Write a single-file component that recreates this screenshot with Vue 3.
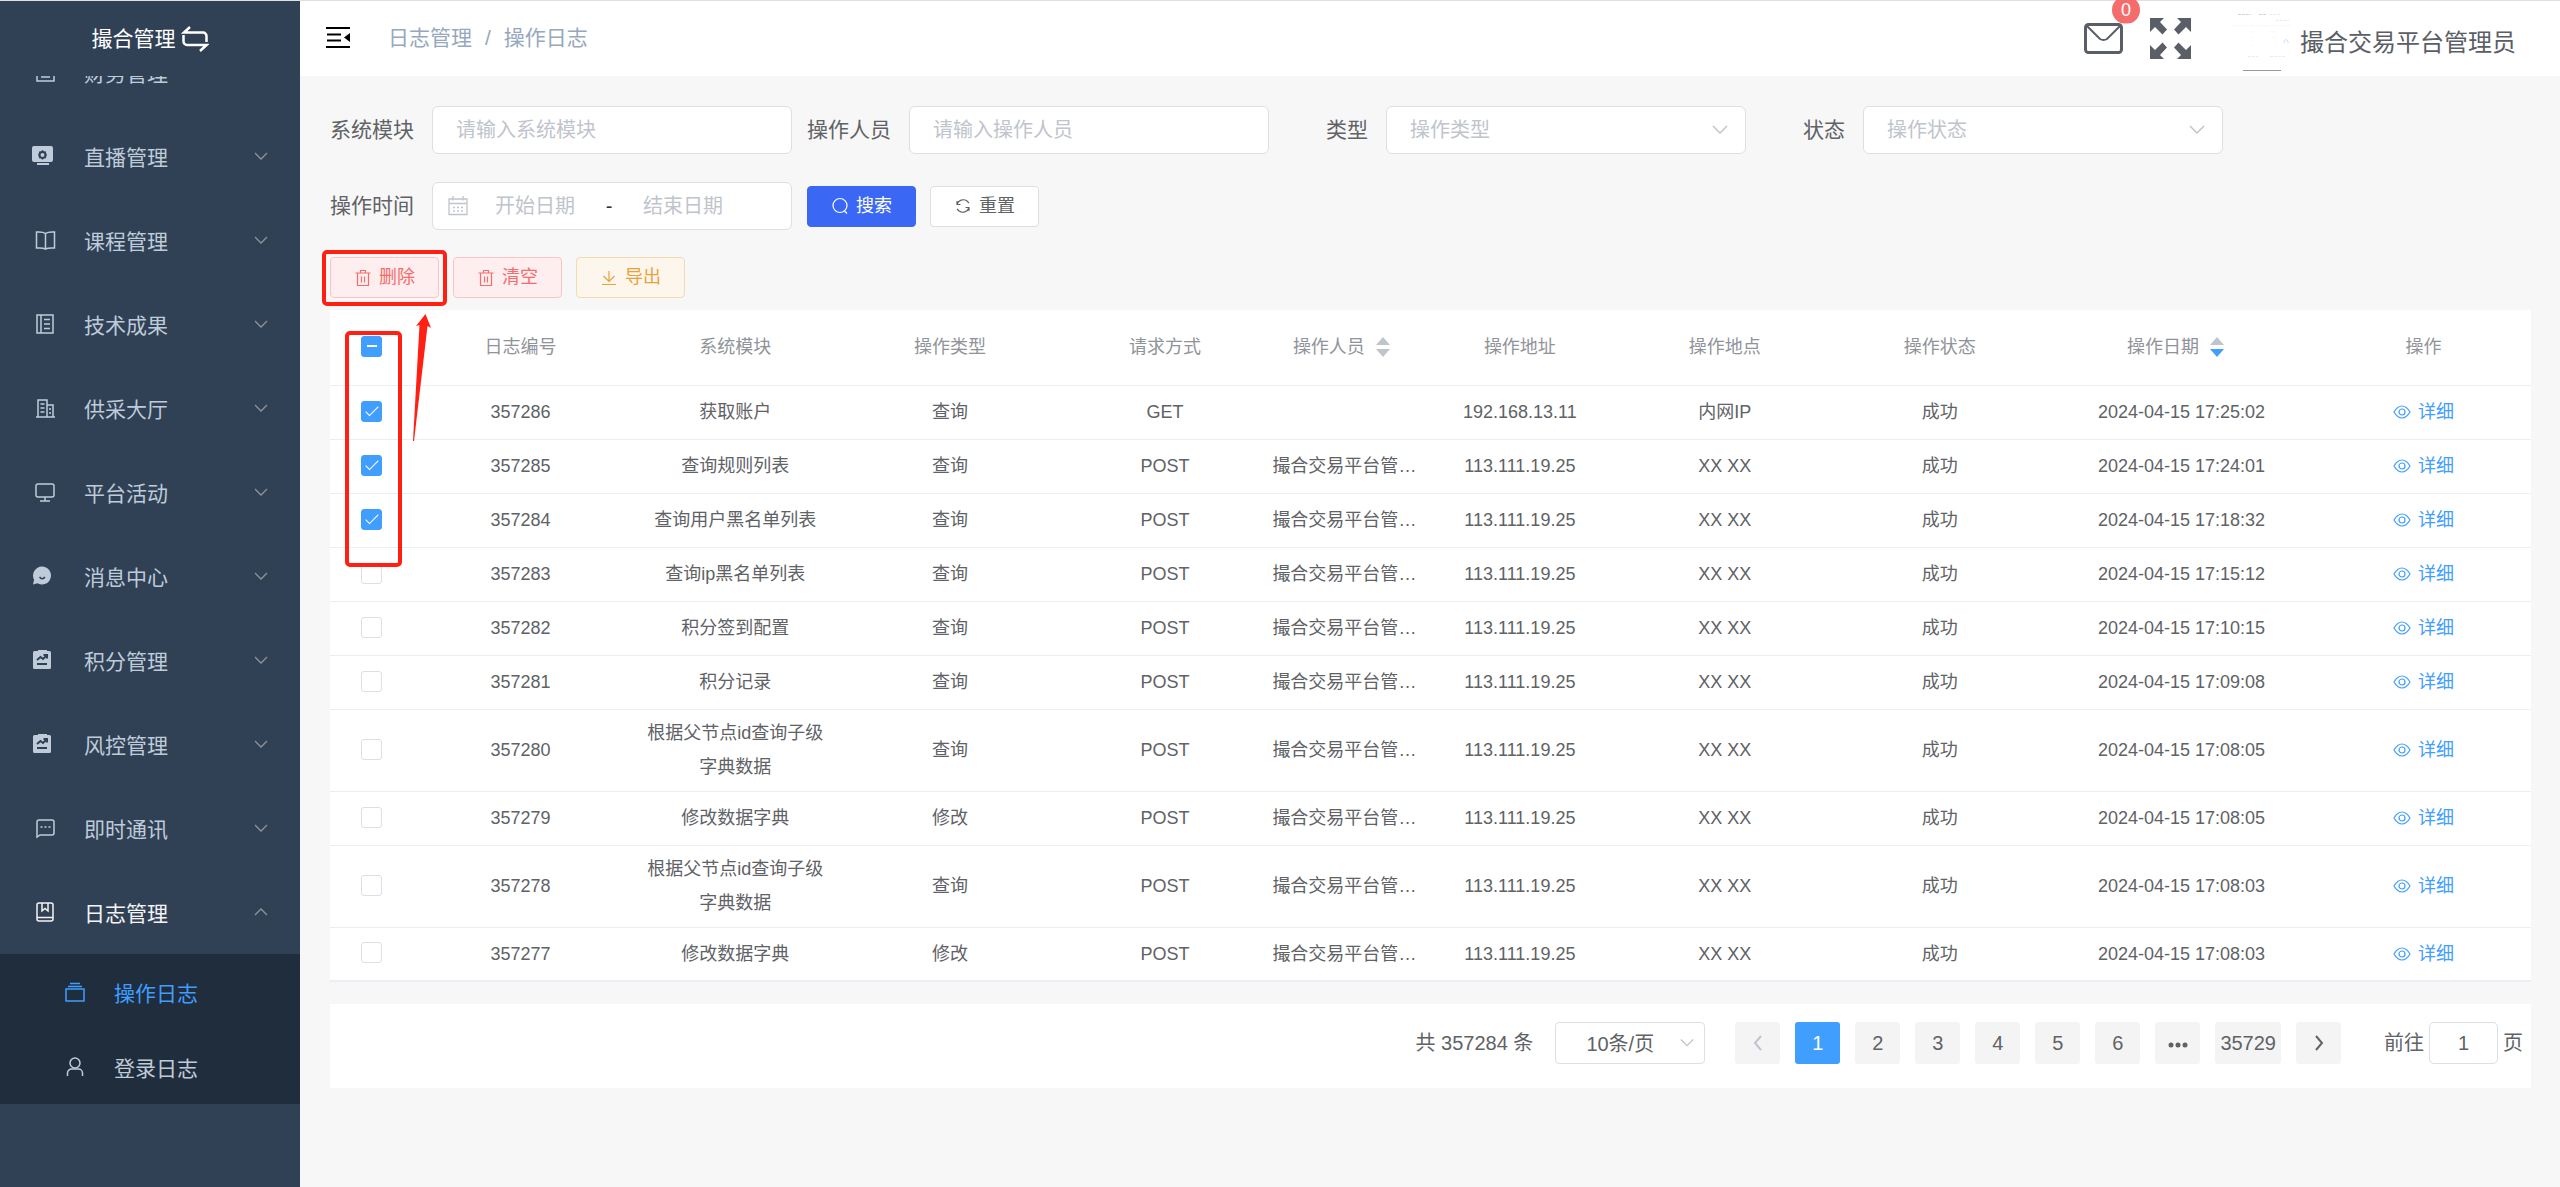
<script setup>
import { ref } from 'vue'

const icons = {
  wallet: '<path d="M4 8h17v13H4zM8 8V4h9v4M8 17h9M8 13h9"/>',
  live: '<g fill="currentColor" stroke="none"><path fill-rule="evenodd" d="M4 2h17a2 2 0 0 1 2 2v12a2 2 0 0 1-2 2H4a2 2 0 0 1-2-2V4a2 2 0 0 1 2-2zM12.500 6l1.500 1.200 1.900.3.300 1.900L17 11l-.8 1.500-.3 1.800-1.900.2-1.500 1.200-1.500-1.200-1.900-.2-.3-1.800L8 11l.8-1.600.3-1.900 1.900-.3zM12.500 9a2 2 0 1 0 0 4 2 2 0 0 0 0-4z"/><path d="M7 19h12v2H7z"/></g>',
  book: '<path d="M12.500 5.500C10 3.500 6.500 4 3.500 4v16c3 0 6-.5 9 1 3-1.500 6-1 9-1V4c-3 0-6.500-.5-9 1.500V21"/>',
  notebook: '<path d="M4 3h16v18H4zM8 3v18M11 7.500h6M11 12h6M11 16.500h6"/>',
  office: '<path d="M3 21h19M5 21V4h9v17M14 9h6v12M7.500 8h4M7.500 12h4M7.500 16h4M16 13h2M16 17h2"/>',
  monitor: '<rect x="3" y="4" width="18" height="13" rx="2"/><path d="M12 17v4M7 21h10"/>',
  chat: '<path fill="currentColor" stroke="none" fill-rule="evenodd" d="M12 2.500a9 9 0 1 1-4.500 16.800L3 20.500l1.100-4.700A9 9 0 0 1 12 2.500zM9 13.200c1.600 3 5 3 6.500 0l-1.300-.6c-1 1.700-3 1.700-4 0z"/>',
  chart: '<path fill="currentColor" stroke="none" d="M5 3h3V2h9v1h2.500a1.500 1.500 0 0 1 1.500 1.500v15a1.500 1.500 0 0 1-1.500 1.500h-15A1.500 1.500 0 0 1 3 19.500v-15A1.500 1.500 0 0 1 4.500 3z"/><path stroke="#304156" stroke-width="2" d="M7 12l3.500-3 2.500 2 4-4M13.500 7H17v3.500M7 16h10"/>',
  message: '<path d="M4 21V6a2 2 0 0 1 2-2h13a2 2 0 0 1 2 2v11a2 2 0 0 1-2 2H7zM7.500 11h2M11.500 11h2M15.500 11h2"/>',
  log: '<rect x="4" y="3" width="16" height="18" rx="2"/><path d="M4 17.500h16M9 3v8l3-2.500 3 2.500V3"/>',
  files: '<path d="M3 9h18v12H3zM5 6.500h14M7 3.500h10"/>',
  user: '<circle cx="12" cy="8" r="5"/><path d="M4.500 21v-3a4 4 0 0 1 4-4h7a4 4 0 0 1 4 4v3"/>',
}

const menu = [
  { text: '财务管理', icon: 'wallet' },
  { text: '直播管理', icon: 'live', solid: true },
  { text: '课程管理', icon: 'book' },
  { text: '技术成果', icon: 'notebook' },
  { text: '供采大厅', icon: 'office' },
  { text: '平台活动', icon: 'monitor' },
  { text: '消息中心', icon: 'chat', solid: true },
  { text: '积分管理', icon: 'chart', solid: true },
  { text: '风控管理', icon: 'chart', solid: true },
  { text: '即时通讯', icon: 'message' },
  {
    text: '日志管理',
    icon: 'log',
    open: true,
    children: [
      { text: '操作日志', icon: 'files', current: true },
      { text: '登录日志', icon: 'user' },
    ],
  },
]

const admin = '撮合交易平台管理员'
const make = (id, module, type, time, checked = false) => ({
  id, module, type, method: 'POST', operator: admin, ip: '113.111.19.25', place: 'XX XX', time: '2024-04-15 ' + time, checked,
})

const rows = ref([
  { ...make(357286, '获取账户', '查询', '17:25:02', true), method: 'GET', operator: '', ip: '192.168.13.11', place: '内网IP' },
  make(357285, '查询规则列表', '查询', '17:24:01', true),
  make(357284, '查询用户黑名单列表', '查询', '17:18:32', true),
  make(357283, '查询ip黑名单列表', '查询', '17:15:12'),
  make(357282, '积分签到配置', '查询', '17:10:15'),
  make(357281, '积分记录', '查询', '17:09:08'),
  make(357280, '根据父节点id查询子级字典数据', '查询', '17:08:05'),
  make(357279, '修改数据字典', '修改', '17:08:05'),
  make(357278, '根据父节点id查询子级字典数据', '查询', '17:08:03'),
  make(357277, '修改数据字典', '修改', '17:08:03'),
])

const pages = [1, 2, 3, 4, 5, 6]
</script>

<template>
  <div class="app">
    <aside class="sidebar">
      <div class="logo">
        <span>撮合管理</span>
        <svg width="28" height="28" viewBox="0 0 28 28" fill="none" stroke="currentColor" stroke-width="2.500">
          <path d="M9 2L3 7.500H22a3.500 3.500 0 0 1 3.500 3.500V17M19 26l6.500-6H6a3.500 3.500 0 0 1-3.500-3.500V10" />
        </svg>
      </div>
      <nav class="menu">
        <ul>
          <li v-for="item in menu" :key="item.text">
            <a href="#" class="menu-item" :class="{ open: item.open }">
              <svg class="menu-icon" :class="{ solid: item.solid }" viewBox="0 0 24 24" v-html="icons[item.icon]"></svg>
              <span>{{ item.text }}</span>
              <svg class="arrow" viewBox="0 0 14 8"><path :d="item.open ? 'M1 7l6-6 6 6' : 'M1 1l6 6 6-6'" /></svg>
            </a>
            <ul v-if="item.children" class="submenu">
              <li v-for="child in item.children" :key="child.text">
                <a href="#" class="menu-item child" :class="{ current: child.current }">
                  <svg class="menu-icon" viewBox="0 0 24 24" v-html="icons[child.icon]"></svg>
                  <span>{{ child.text }}</span>
                </a>
              </li>
            </ul>
          </li>
        </ul>
      </nav>
    </aside>

    <div class="main">
      <header class="navbar">
        <button class="icon-button" aria-label="折叠菜单">
          <svg width="24" height="24" viewBox="0 0 24 24" stroke="#000" fill="none">
            <path stroke-width="2" d="M0 2h24M1 8.500h14M1 14.500h14M0 21h24" />
            <path fill="#000" stroke="none" d="M24 7v9l-6-4.500z" />
          </svg>
        </button>
        <nav class="crumbs"><a href="#">日志管理</a><span>/</span><span>操作日志</span></nav>
        <div class="tools">
          <button class="icon-button mail" aria-label="消息">
            <svg width="39" height="31" viewBox="0 0 39 31" fill="none" stroke="#5a5e66" stroke-width="3">
              <rect x="1.500" y="1.500" width="36" height="28" rx="3" />
              <path stroke-width="2" d="M3 3l13 13q3.500 2 7 0L36 3" />
            </svg>
            <span class="badge">0</span>
          </button>
          <button class="icon-button" aria-label="全屏">
            <svg width="41" height="41" viewBox="0 0 41 41" fill="#5a5e66">
              <path d="M0 0h14l-4 4 7 7.500-4.500 5L5 9l-5 5z" />
              <path d="M41 0H27l4 4-7 7.500 4.500 5L36 9l5 5z" />
              <path d="M0 41h14l-4-4 7-7.500-4.500-5L5 32l-5-5z" />
              <path d="M41 41H27l4-4-7-7.500 4.500-5L36 32l5-5z" />
            </svg>
          </button>
          <a href="#" class="account">
            <svg class="avatar" width="60" height="60" viewBox="0 0 60 60" fill="none">
              <path stroke="#d2d2d2" stroke-dasharray="3 1" d="M6 3.500h13M27 3.500h7" />
              <path stroke="#ececec" stroke-dasharray="3 1" d="M37 3.500h12M44 9.500h13M16 45.500h10M38 45.500h15" />
              <path stroke="#f9f9f9" d="M0 14.500h60M17 20.500h4M38 20.500h5M17 26.500h4M38 26.500h5M17 34.500h4" />
              <path stroke="#c7e2fb" d="M52 32v-2q2-3 4 0v2" />
              <path stroke="#999" stroke-width="1" d="M11 59.500h38" />
            </svg>
            <span>撮合交易平台管理员</span>
          </a>
        </div>
      </header>

      <main class="content">
        <form class="filters" @submit.prevent>
          <div class="field">
            <label for="module">系统模块</label>
            <input id="module" class="control" type="text" placeholder="请输入系统模块" />
          </div>
          <div class="field">
            <label for="operator">操作人员</label>
            <input id="operator" class="control" type="text" placeholder="请输入操作人员" />
          </div>
          <div class="field">
            <label for="type">类型</label>
            <div class="select">
              <select id="type" class="control"><option value="">操作类型</option></select>
              <svg viewBox="0 0 16 10"><path d="M1 1l7 7 7-7" /></svg>
            </div>
          </div>
          <div class="field">
            <label for="status">状态</label>
            <div class="select">
              <select id="status" class="control"><option value="">操作状态</option></select>
              <svg viewBox="0 0 16 10"><path d="M1 1l7 7 7-7" /></svg>
            </div>
          </div>
          <div class="field">
            <label for="start">操作时间</label>
            <div class="control range">
              <svg width="20" height="20" viewBox="0 0 20 20" fill="none" stroke="currentColor" stroke-width="1.300">
                <path d="M1 3h18v15.500H1zM1 7.500h18M5 0v4.500M15 0v4.500M5 11.500h2M9 11.500h2M13 11.500h2M5 15h2M9 15h2M13 15h2" />
              </svg>
              <input id="start" type="text" placeholder="开始日期" />
              <span>-</span>
              <input type="text" placeholder="结束日期" aria-label="结束日期" />
            </div>
          </div>
          <div class="actions">
            <button class="btn primary">
              <svg viewBox="0 0 18 18"><circle cx="9" cy="8.500" r="7" /><path d="M13.500 14l2.500 2.500" /></svg>搜索
            </button>
            <button class="btn" type="reset">
              <svg viewBox="0 0 18 18"><path d="M3 7.500a6.500 6.500 0 0 1 10-3.500l2 2M15 10.500a6.500 6.500 0 0 1-10 3.500l-2-2M3 4v3.500h3.500M15 14v-3.500h-3.500" /></svg>重置
            </button>
          </div>
        </form>

        <div class="toolbar">
          <div class="marked">
            <button class="btn danger">
              <svg viewBox="0 0 18 18"><path d="M1.500 4h15M3.500 4v12.500h11V4M6.500 4V1.500h5V4M7.500 7.500v6M10.500 7.500v6" /></svg>删除
            </button>
          </div>
          <button class="btn danger">
            <svg viewBox="0 0 18 18"><path d="M1.500 4h15M3.500 4v12.500h11V4M6.500 4V1.500h5V4M7.500 7.500v6M10.500 7.500v6" /></svg>清空
          </button>
          <button class="btn warning">
            <svg viewBox="0 0 18 18"><path d="M2 15.500h14M9 2v10.500M3.500 7L9 12.500 14.500 7" /></svg>导出
          </button>
        </div>

        <div class="table-wrap">
          <table>
            <colgroup>
              <col class="w-check" /><col /><col /><col /><col /><col class="w-operator" />
              <col class="w-ip" /><col /><col /><col class="w-date" /><col />
            </colgroup>
            <thead>
              <tr>
                <th><input type="checkbox" :indeterminate="true" aria-label="全选" /></th>
                <th>日志编号</th>
                <th>系统模块</th>
                <th>操作类型</th>
                <th>请求方式</th>
                <th><span class="sort">操作人员<svg viewBox="0 0 14 20"><path d="M7 0l7 8H0z" /><path d="M7 20l7-8H0z" /></svg></span></th>
                <th>操作地址</th>
                <th>操作地点</th>
                <th>操作状态</th>
                <th><span class="sort">操作日期<svg viewBox="0 0 14 20"><path d="M7 0l7 8H0z" /><path class="on" d="M7 20l7-8H0z" /></svg></span></th>
                <th>操作</th>
              </tr>
            </thead>
            <tbody>
              <tr v-for="row in rows" :key="row.id">
                <td><input v-model="row.checked" type="checkbox" :aria-label="'选择 ' + row.id" /></td>
                <td>{{ row.id }}</td>
                <td class="module">{{ row.module }}</td>
                <td>{{ row.type }}</td>
                <td>{{ row.method }}</td>
                <td class="clip">{{ row.operator }}</td>
                <td>{{ row.ip }}</td>
                <td>{{ row.place }}</td>
                <td>成功</td>
                <td>{{ row.time }}</td>
                <td>
                  <a href="#" class="detail">
                    <svg viewBox="0 0 18 18"><path d="M1 9q3.500-6 8-6t8 6q-3.500 6-8 6T1 9z" /><circle cx="9" cy="9" r="3" /></svg>详细
                  </a>
                </td>
              </tr>
            </tbody>
          </table>
          <svg class="callout" width="104" height="260" viewBox="0 0 104 260">
            <rect x="17" y="23" width="53" height="232" rx="3" fill="none" stroke="#ff1f13" stroke-width="4" />
            <path fill="#ff1f13" d="M95.500 4l5.500 14-3.500-2L84 131h-1l6.500-116-3.500 1z" />
          </svg>
        </div>

        <footer class="pager">
          <span class="total">共 357284 条</span>
          <div class="select size">
            <select aria-label="每页条数"><option>10条/页</option></select>
            <svg viewBox="0 0 16 10"><path d="M1 1l7 7 7-7" /></svg>
          </div>
          <div class="numbers">
            <button disabled aria-label="上一页"><svg viewBox="0 0 10 16"><path d="M8 1L2 8l6 7" /></svg></button>
            <button v-for="n in pages" :key="n" :class="{ on: n === 1 }">{{ n }}</button>
            <button aria-label="更多"><svg class="dots" viewBox="0 0 20 6"><circle cx="3" cy="3" r="2.500" /><circle cx="10" cy="3" r="2.500" /><circle cx="17" cy="3" r="2.500" /></svg></button>
            <button>35729</button>
            <button aria-label="下一页"><svg viewBox="0 0 10 16"><path d="M2 1l6 7-6 7" /></svg></button>
          </div>
          <label class="jump">前往<input type="text" value="1" />页</label>
        </footer>
      </main>
    </div>
  </div>
</template>

<style>
body {
  background: #f7f7f7;
}
</style>

<style scoped>
* {
  box-sizing: border-box;
}
.app {
  display: flex;
  min-height: 100vh;
  border-top: 1px solid #dfe1df;
  font-family: "Liberation Sans", "Noto Sans CJK SC", sans-serif;
  font-size: 18px;
  color: #606266;
}
a {
  color: inherit;
  text-decoration: none;
}
ul {
  margin: 0;
  padding: 0;
  list-style: none;
}
button,
input,
select {
  font: inherit;
  color: inherit;
}
input::placeholder {
  color: #c0c4cc;
  opacity: 1;
}

/* sidebar */
.sidebar {
  flex: 0 0 300px;
  background: #304156;
}
.logo {
  display: flex;
  align-items: center;
  justify-content: center;
  gap: 5px;
  height: 75px;
  color: #fff;
  font-size: 21px;
  line-height: 30px;
}
.menu {
  overflow: hidden;
}
.menu > ul {
  margin-top: -46px;
}
.menu-item {
  display: flex;
  align-items: center;
  height: 84px;
  padding: 0 32px 0 33px;
  color: #bfcbd9;
  font-size: 21px;
}
.menu-item.open {
  color: #f4f4f5;
}
.menu-icon {
  width: 24px;
  height: 24px;
  margin-right: 27px;
  fill: none;
  stroke: currentColor;
  stroke-width: 1.5;
}
.menu-icon.solid {
  margin-left: -3px;
  margin-right: 30px;
}
.arrow {
  width: 14px;
  height: 8px;
  margin-left: auto;
  fill: none;
  stroke: #909399;
  stroke-width: 1.3;
}
.submenu {
  background: #1f2d3d;
}
.menu-item.child {
  height: 75px;
  padding-left: 63px;
}
.menu-item.current {
  color: #409eff;
}

/* top bar */
.main {
  flex: 1;
  min-width: 0;
  background: #f7f7f7;
}
.navbar {
  display: flex;
  align-items: center;
  height: 75px;
  padding: 0 44px 1px 26px;
  background: #fff;
  line-height: 30px;
}
.icon-button {
  display: flex;
  padding: 0;
  border: 0;
  background: none;
}
.crumbs {
  display: flex;
  gap: 13px;
  margin-left: 38px;
  font-size: 21px;
  color: #97a8be;
}
.tools {
  display: flex;
  align-items: center;
  gap: 27px;
  margin-left: auto;
}
.mail {
  position: relative;
}
.badge {
  position: absolute;
  top: -27px;
  right: -17px;
  width: 28px;
  height: 28px;
  border-radius: 14px;
  background: #f56c6c;
  color: #fff;
  line-height: 28px;
  text-align: center;
  clip-path: inset(4px 0 0 0);
}
.account {
  display: flex;
  align-items: center;
  gap: 8px;
  margin-left: 14px;
  padding-top: 10px;
  font-size: 24px;
  color: #5a5e66;
}
.avatar {
  margin-top: -4px;
}

/* filters */
.content {
  padding: 30px 29px 30px 30px;
}
.filters {
  display: flex;
  flex-wrap: wrap;
  align-items: center;
  gap: 28px 15px;
}
.field {
  display: flex;
  align-items: center;
}
.field label {
  width: 102px;
  padding-right: 18px;
  font-size: 21px;
  line-height: 30px;
  text-align: right;
}
.control {
  width: 360px;
  height: 48px;
  padding: 0 23px;
  border: 1px solid #dcdfe6;
  border-radius: 6px;
  background: #fff;
  font-size: 20px;
  outline: none;
}
.select {
  position: relative;
}
.select select {
  display: block;
  appearance: none;
  color: #c0c4cc;
}
.select svg {
  position: absolute;
  top: 0;
  bottom: 0;
  right: 18px;
  width: 16px;
  height: 10px;
  margin: auto 0;
  fill: none;
  stroke: #c0c4cc;
  stroke-width: 1.5;
  pointer-events: none;
}
.range {
  display: flex;
  align-items: center;
  padding: 0 15px;
  color: #c0c4cc;
}
.range svg {
  margin-right: 2px;
}
.range input {
  width: 130px;
  padding: 0;
  border: 0;
  background: none;
  text-align: center;
}
.range span {
  width: 18px;
  color: #303133;
  text-align: center;
}
.actions,
.toolbar {
  display: flex;
  gap: 14px;
}
.toolbar {
  margin: 27px 0 12px;
}
.btn {
  display: flex;
  align-items: center;
  justify-content: center;
  gap: 7px;
  width: 109px;
  height: 41px;
  padding: 0;
  border: 1px solid #dcdfe6;
  border-radius: 4px;
  background: #fff;
  line-height: 27px;
}
.btn svg {
  width: 18px;
  height: 18px;
  fill: none;
  stroke: currentColor;
  stroke-width: 1.2;
}
.btn.primary {
  border-color: #3a68f5;
  background: #3a68f5;
  color: #fff;
}
.btn.danger {
  border-color: #fbc4c4;
  background: #feeeef;
  color: #f56c6c;
}
.btn.warning {
  border-color: #f5dab1;
  background: #fdf6ec;
  color: #e6a23c;
}
.marked {
  position: relative;
}
.marked::after {
  content: "";
  position: absolute;
  inset: -7px -8px -8px;
  border: 4px solid #ff1f13;
  border-radius: 5px;
  pointer-events: none;
}

/* table */
.table-wrap {
  position: relative;
  background: #fff;
}
table {
  width: 100%;
  table-layout: fixed;
  border-collapse: separate;
  border-spacing: 0;
  line-height: 34px;
}
.w-check {
  width: 83px;
}
.w-operator {
  width: 150px;
}
.w-ip {
  width: 195px;
}
.w-date {
  width: 269px;
}
th,
td {
  height: 54px;
  padding: 6px 0 7px;
  border-bottom: 1px solid #ebeef5;
  text-align: center;
}
tr:last-child td {
  border-bottom-width: 2px;
}
th {
  height: 76px;
  color: #909399;
  font-weight: 400;
}
.module {
  padding-left: 15px;
  padding-right: 15px;
}
.clip {
  overflow: hidden;
  text-overflow: ellipsis;
  white-space: nowrap;
}
.sort {
  display: inline-flex;
  align-items: center;
  gap: 11px;
  padding-right: 12px;
}
.sort svg {
  width: 14px;
  height: 20px;
  fill: #c0c4cc;
}
.sort .on {
  fill: #409eff;
}
input[type="checkbox"] {
  appearance: none;
  display: grid;
  place-items: center;
  width: 21px;
  height: 21px;
  margin: 0 auto 2px;
  border: 1px solid #dcdfe6;
  border-radius: 3px;
  background: #fff;
}
input[type="checkbox"]:checked,
input[type="checkbox"]:indeterminate {
  border-color: #409eff;
  background: #409eff;
}
input[type="checkbox"]:checked::after {
  content: "";
  width: 5px;
  height: 12px;
  margin-bottom: 3px;
  border: solid #fff;
  border-width: 0 1px 1px 0;
  transform: rotate(45deg);
}
input[type="checkbox"]:indeterminate::after {
  content: "";
  width: 10px;
  height: 2px;
  margin-bottom: 1px;
  background: #fff;
}
.detail {
  display: inline-flex;
  align-items: center;
  gap: 7px;
  color: #409eff;
  vertical-align: top;
}
.detail svg {
  width: 18px;
  height: 18px;
  fill: none;
  stroke: currentColor;
  stroke-width: 1.2;
}
.callout {
  position: absolute;
  top: 0;
  left: 0;
  pointer-events: none;
}

/* pagination */
.pager {
  display: flex;
  align-items: flex-start;
  justify-content: flex-end;
  height: 84px;
  margin-top: 22px;
  padding: 18px 8px 0 0;
  background: #fff;
  font-size: 20px;
  line-height: 42px;
}
.total {
  margin-right: 22px;
}
.size {
  margin-right: 30px;
}
.size select {
  width: 150px;
  height: 42px;
  padding: 0 30px;
  border: 1px solid #dcdfe6;
  border-radius: 4px;
  background: #fff;
  color: #606266;
}
.size svg {
  right: 11px;
  width: 14px;
}
.numbers {
  display: flex;
  gap: 15px;
}
.numbers button {
  display: flex;
  align-items: center;
  justify-content: center;
  min-width: 45px;
  height: 42px;
  padding: 0 5px;
  border: 0;
  border-radius: 3px;
  background: #f4f4f5;
}
.numbers button.on {
  background: #409eff;
  color: #fff;
}
.numbers button:disabled {
  color: #c0c4cc;
}
.numbers svg {
  width: 10px;
  height: 16px;
  fill: none;
  stroke: currentColor;
  stroke-width: 2;
}
.numbers .dots {
  width: 20px;
  height: 6px;
  margin-top: 4px;
  fill: currentColor;
  stroke: none;
}
.jump {
  display: flex;
  gap: 5px;
  margin-left: 43px;
}
.jump input {
  width: 69px;
  height: 42px;
  padding: 0;
  border: 1px solid #dcdfe6;
  border-radius: 5px;
  background: #fff;
  text-align: center;
}
</style>
